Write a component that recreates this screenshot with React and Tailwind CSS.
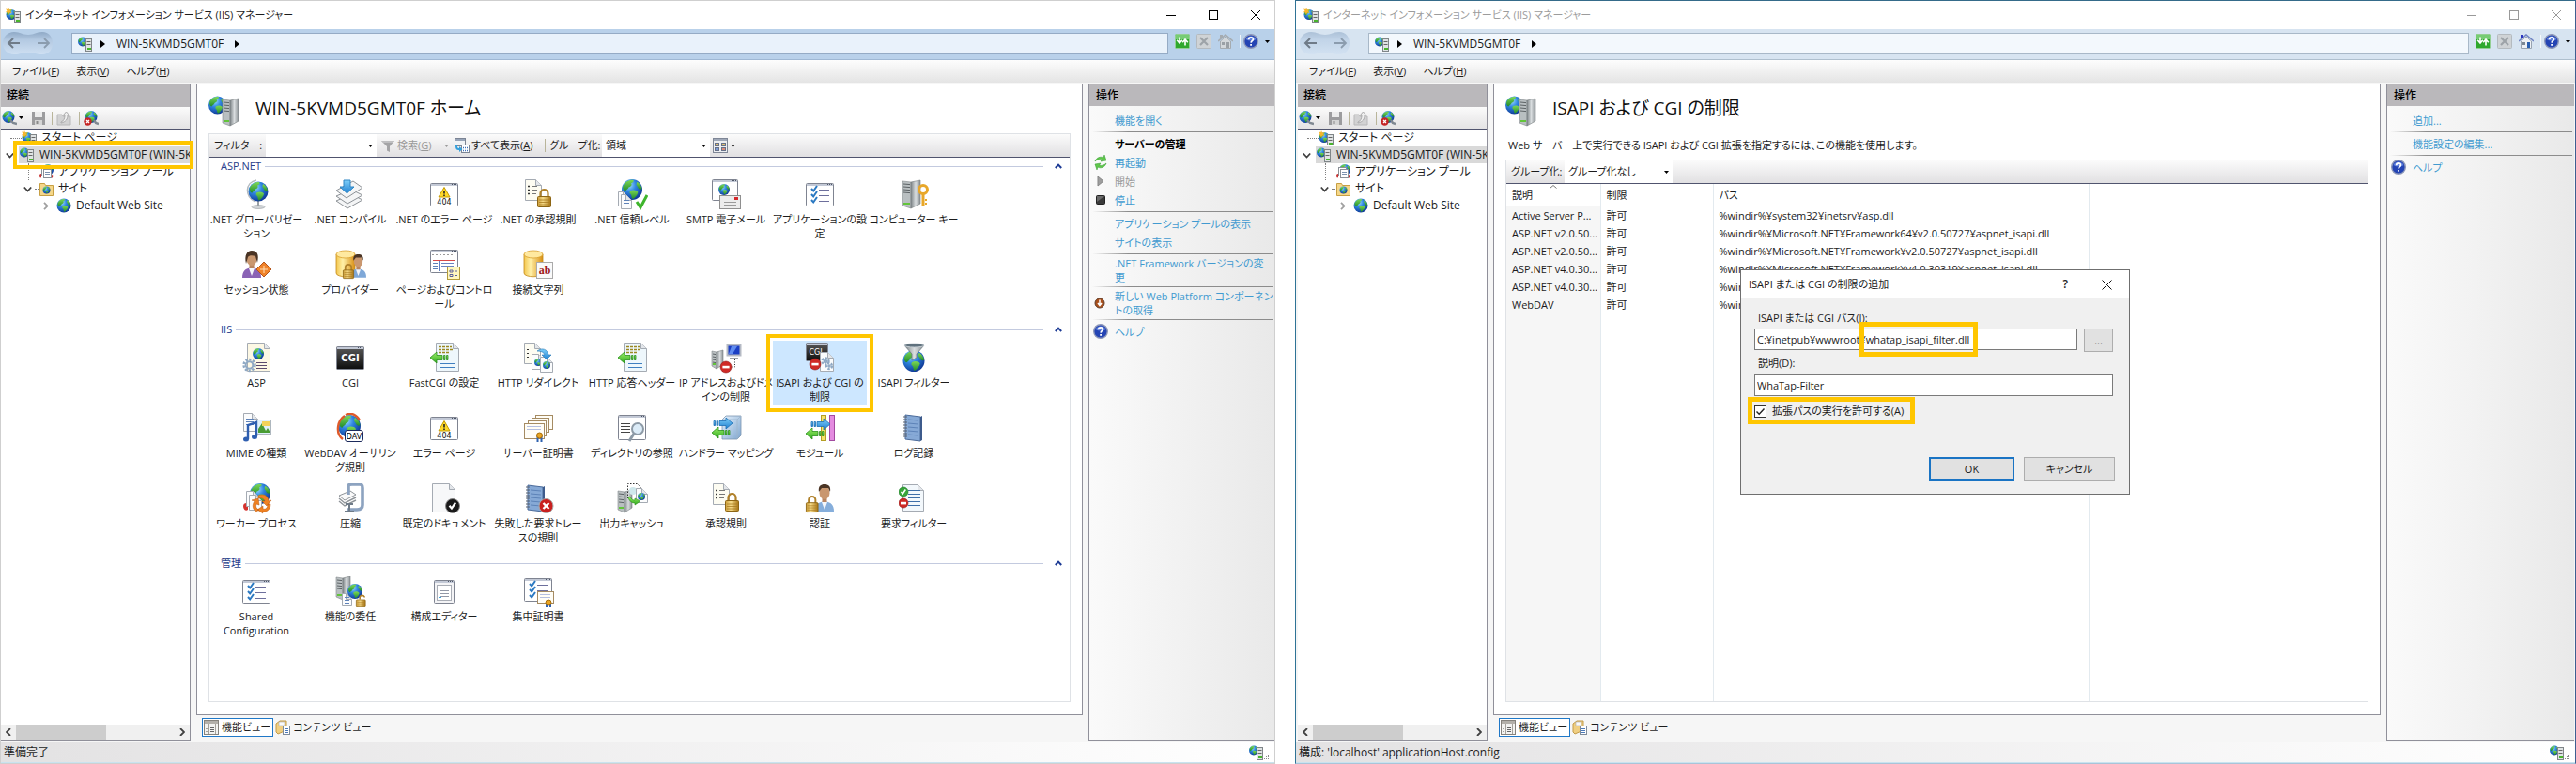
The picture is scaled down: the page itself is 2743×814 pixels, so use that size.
import React from "react";

/* ---------- shared gradients ---------- */
function Defs() {
  return (
    <svg width="0" height="0" className="absolute" aria-hidden="true">
      <defs>
        <radialGradient id="gSea" cx="0.36" cy="0.28" r="0.8">
          <stop offset="0" stopColor="#9fe0ff" />
          <stop offset="0.4" stopColor="#2f86e0" />
          <stop offset="1" stopColor="#0b2f8c" />
        </radialGradient>
        <linearGradient id="gLand" x1="0" y1="0" x2="0" y2="1">
          <stop offset="0" stopColor="#7ed957" />
          <stop offset="1" stopColor="#1f8a2b" />
        </linearGradient>
        <linearGradient id="gMetal" x1="0" y1="0" x2="1" y2="0">
          <stop offset="0" stopColor="#7d8487" />
          <stop offset="0.5" stopColor="#d9dddf" />
          <stop offset="1" stopColor="#8d9396" />
        </linearGradient>
        <linearGradient id="gGold" x1="0" y1="0" x2="1" y2="0">
          <stop offset="0" stopColor="#f3c64d" />
          <stop offset="0.35" stopColor="#fff0a8" />
          <stop offset="1" stopColor="#d98f12" />
        </linearGradient>
        <linearGradient id="gBrass" x1="0" y1="0" x2="1" y2="0">
          <stop offset="0" stopColor="#c99a35" />
          <stop offset="0.4" stopColor="#f7dc8a" />
          <stop offset="1" stopColor="#a87412" />
        </linearGradient>
        <linearGradient id="gDark" x1="0" y1="0" x2="0" y2="1">
          <stop offset="0" stopColor="#5a5a5a" />
          <stop offset="1" stopColor="#0c0c0c" />
        </linearGradient>
        <linearGradient id="gBlueBox" x1="0" y1="0" x2="1" y2="1">
          <stop offset="0" stopColor="#e6f2fd" />
          <stop offset="1" stopColor="#7fa6cf" />
        </linearGradient>
        <linearGradient id="gGreen" x1="0" y1="0" x2="0" y2="1">
          <stop offset="0" stopColor="#9cf06a" />
          <stop offset="1" stopColor="#2ea81c" />
        </linearGradient>
        <linearGradient id="gSky" x1="0" y1="0" x2="0" y2="1">
          <stop offset="0" stopColor="#7fd0fa" />
          <stop offset="1" stopColor="#1f7fd0" />
        </linearGradient>
        <linearGradient id="gPill" x1="0" y1="0" x2="0" y2="1">
          <stop offset="0" stopColor="#8fa9c6" />
          <stop offset="0.35" stopColor="#b3c9e2" />
          <stop offset="1" stopColor="#cfe0f2" />
        </linearGradient>
      </defs>
    </svg>
  );
}

/* ---------- drawing parts ---------- */
const at = (x, y, k = 1) => `translate(${x} ${y}) scale(${k})`;

function Globe({ x, y, r }) {
  return (
    <g transform={at(x, y, r / 10)}>
      <circle r="10" fill="url(#gSea)" />
      <path d="M-8.5-4C-6-8.5-2-9.6 1-9.4 2.5-8 .5-6.8-1-6 .5-4.6-1-3-3-2.4-3.4-.6-5.6 0-6.4 1.6-8 1-9.6-1-8.5-4Z" fill="url(#gLand)" />
      <path d="M-1.5 1.2C1-.2 4.4.4 5.8 2.4 5.4 5 3 7.6.8 9.2-1 8 .2 5.6-1.6 4.4-2.6 3.4-2.4 2-1.5 1.2Z" fill="url(#gLand)" />
      <path d="M5-7.6C7.6-6 9.4-3.4 9.6-.6 7.6.4 6-1 5.4-3 4-4 3.8-6 5-7.6Z" fill="url(#gLand)" />
    </g>
  );
}

function Tower({ x, y, w = 15, h = 27 }) {
  const f = Math.round(w * 0.45);
  return (
    <g transform={at(x, y)}>
      <path d={`M0 1 L${f} 2 V${h} L0 ${h - 3} Z`} fill="#b9bfc1" stroke="#81878a" strokeWidth=".6" />
      <path d={`M${f} 2 L${w} 0 V${h - 5} L${f} ${h} Z`} fill="url(#gMetal)" stroke="#777d80" strokeWidth=".6" />
      {[4, 7, 10, 13].filter((v) => v < h - 6).map((v) => (
        <path key={v} d={`M1 ${v} L${f - 1} ${v + 0.6}`} stroke="#5d6366" strokeWidth="1" />
      ))}
      <rect x="1" y={h - 6} width={f - 2} height="2" fill="#62c43a" />
    </g>
  );
}

function Frame({ x = 1, y = 4, w = 29, h = 24, fill = "#fff" }) {
  return (
    <g>
      <rect x={x + 0.5} y={y + 0.5} width={w} height={h} rx="1" fill={fill} stroke="#7f8491" />
      <rect x={x + 1} y={y + 1} width={w - 1} height="2" fill="#c3c9d6" />
      <path d={`M${x + w - 6} ${y + 1.5}h1m1 0h1m1 0h1`} stroke="#4d5566" />
    </g>
  );
}

function Page({ x, y, w = 19, h = 26, fill = "#fbfcfd", stroke = "#a5abb3" }) {
  const c = 6;
  return (
    <g transform={at(x + 0.5, y + 0.5)}>
      <path d={`M0 0H${w - c}L${w} ${c}V${h}H0Z`} fill={fill} stroke={stroke} />
      <path d={`M${w - c} 0V${c}H${w}`} fill="#e3e6ea" stroke={stroke} />
    </g>
  );
}

function Lock({ x, y, open }) {
  return (
    <g transform={at(x, y)}>
      <path d={open ? "M6 8V4a4 4 0 0 1 7 0v1" : "M3.5 9V5a4 4 0 0 1 8 0v4"} fill="none" stroke="#b0812a" strokeWidth="2.2" />
      <rect x="0.5" y="8.5" width="14" height="11" rx="1" fill="url(#gBrass)" stroke="#8d6514" />
      <path d="M2 12h11M2 14.500h11M2 17h11" stroke="#a87b22" strokeWidth=".8" />
    </g>
  );
}

function Person({ x, y, body, hair }) {
  return (
    <g transform={at(x, y)}>
      <path d="M0 29c0-7 3-10 10-11 7 1 10 4 10 11Z" fill={body} />
      <path d="M7 19l3 8 3-8Z" fill="#f4f6fa" />
      <rect x="7.500" y="13" width="5" height="6" fill="#b98560" />
      <ellipse cx="10" cy="9" rx="5.500" ry="7" fill="#c9976f" />
      <path d={hair === "long" ? "M4 14C2 5 5 0 10 0c6 0 8 4 6 13L14 6C11 5 7 5 6 7Z" : "M4 8C3 2 6 0 10 0s7 2 6 8l-2-4H7Z"} fill="#4a3424" />
    </g>
  );
}

function Drum({ x, y }) {
  return (
    <g transform={at(x, y)}>
      <path d="M0 4V24c0 5 20 5 20 0V4Z" fill="url(#gGold)" stroke="#c48a1a" strokeWidth=".8" />
      <ellipse cx="10" cy="4" rx="10" ry="4" fill="#ffe9a0" stroke="#d9a02c" strokeWidth=".8" />
    </g>
  );
}

const ArrowL = ({ x, y }) => (
  <g transform={at(x, y)} fill="url(#gGreen)" stroke="#2b8f1d" strokeWidth=".8">
    <path d="M0 6 7 0v3.500h6v5H7V12Z" />
    <path d="M14.500 3.500h1.500v5h-1.500zM17.500 3.500h1.500v5h-1.500z" />
  </g>
);
const ArrowR = ({ x, y }) => (
  <g transform={at(x, y)} fill="url(#gSky)" stroke="#1c6fb5" strokeWidth=".8">
    <path d="M20 6 13 0v3.500H6v5h7V12Z" />
    <path d="M0 3.500h1.500v5H0zM3 3.500h1.500v5H3z" />
  </g>
);
const Stop = ({ x, y, r = 6 }) => (
  <g>
    <circle cx={x} cy={y} r={r} fill="#cf2a26" stroke="#8f1c1c" strokeWidth=".6" />
    <rect x={x - r * 0.6} y={y - 1.2} width={r * 1.2} height="2.600" fill="#fff" />
  </g>
);
const Tick = ({ x, y, c = "#2b79c2", k = 1, w = 2 }) => (
  <path transform={at(x, y, k)} d="M0 3 2.200 5.500 6 0" fill="none" stroke={c} strokeWidth={w} />
);
const Checks = () => (
  <g>
    {[9, 15, 21].map((v) => (
      <g key={v}>
        <Tick x={7} y={v - 2} />
        <path d={`M15 ${v + 2.5}h11`} stroke="#6d6f9c" />
      </g>
    ))}
  </g>
);
const Lines = ({ x, y, w, n, gap = 3, c = "#5e82b8" }) => (
  <path d={Array.from({ length: n }, (_, i) => `M${x} ${y + i * gap + 0.5}h${w}`).join("")} stroke={c} />
);
const Error404 = () => (
  <g>
    <Frame />
    <path d="M16 8.500 22 19H10Z" fill="#ffd928" stroke="#c49a00" strokeLinejoin="round" />
    <path d="M16 12v3.500M16 16.500v1.500" stroke="#222" strokeWidth="1.600" />
    <text x="16" y="27" fontSize="8" fontFamily="DejaVu Sans" textAnchor="middle" fill="#111">404</text>
  </g>
);
const Book = ({ x, y }) => (
  <g transform={at(x, y)}>
    <path d="M3 1 19 3V29L3 27Z" fill="#86a9d6" stroke="#4a6a9a" />
    <path d="M19 3 21 2V28L19 29Z" fill="#3d5b8c" />
    <path d="M6 6l11 1M6 10l11 1M6 14l11 1M6 18l11 1M6 22l11 1" stroke="#5d83b8" />
    <path d="M1 3h4M1 6h4M1 9h4M1 12h4M1 15h4M1 18h4M1 21h4M1 24h4" stroke="#56606e" />
  </g>
);
const Cert = ({ x, y, w = 18, h = 12 }) => (
  <g>
    <rect x={x + 0.5} y={y + 0.5} width={w} height={h} fill="#fffdf6" stroke="#a58b62" />
    <Lines x={x + 3} y={y + 3} w={w - 6} n={2} c="#b4bfe0" />
  </g>
);
const Seal = ({ x, y }) => (
  <g>
    <path d={`M${x - 2} ${y + 1}v6M${x + 2} ${y + 1}v6`} stroke="#2f62b0" strokeWidth="2" />
    <circle cx={x} cy={y} r="3" fill="#e9a420" stroke="#a86c08" />
  </g>
);
const Cog = ({ x, y, r = 6 }) => (
  <g fill="none" stroke="#8fa9c4">
    <circle cx={x} cy={y} r={r} strokeWidth="2.400" strokeDasharray="2.300 1.600" />
    <circle cx={x} cy={y} r={r - 2.2} strokeWidth="2" />
  </g>
);
const ListPage = () => (
  <g>
    <Page x={2} y={0} w={17} h={22} fill="#fdfcf2" />
    <path d="M5 7.500h2M5 11.500h2M5 15.500h2" stroke="#333" strokeWidth="1.600" />
    <path d="M9 7.500h6M9 11.500h6M9 15.500h5" stroke="#777" />
  </g>
);

/* ---------- 32px feature icons ---------- */
const art = {
  globalization: (
    <g>
      <ellipse cx="18" cy="29.500" rx="7" ry="2" fill="#cfd3d6" stroke="#9aa0a5" strokeWidth=".6" />
      <path d="M17 23h2v6h-2z" fill="#9aa0a5" />
      <path d="M16 1C4 3 3 19 15 24" fill="none" stroke="#b5babf" strokeWidth="1.600" />
      <Globe x={18} y={13} r={10.500} />
    </g>
  ),
  compile: (
    <g fill="#f4f5f6" stroke="#8c9196" strokeLinejoin="round">
      <path d="M1 23 17 16 29 22 13 31Z" />
      <path d="M1 18 17 11 29 17 13 26Z" />
      <path d="M1 12 19 2 29 9 12 20Z" />
      <path d="M9 1h7v7h4l-7.500 7L5 8h4Z" fill="url(#gSky)" stroke="#2f86c4" />
    </g>
  ),
  error: <Error404 />,
  auth: (
    <g>
      <ListPage />
      <Lock x={15} y={10} />
    </g>
  ),
  trust: (
    <g>
      <Globe x={16} y={11} r={11} />
      <Page x={1} y={13} w={11} h={15} />
      <Page x={4} y={16} w={11} h={15} />
      <Lines x={7} y={22} w={6} n={3} />
      <path d="M21 24l4 6 7-13" fill="none" stroke="#3fb52c" strokeWidth="3" />
    </g>
  ),
  smtp: (
    <g>
      <Frame x={1} y={0} w={27} h={22} />
      <Globe x={14} y={11} r={6} />
      <rect x="9.500" y="17.500" width="22" height="14" fill="#ececec" stroke="#8f8f8f" />
      <Lines x={14} y={24} w={13} n={2} c="#9a9a9a" />
      <rect x="25" y="19" width="4" height="3" fill="#d4282c" />
    </g>
  ),
  appset: (
    <g>
      <Frame />
      <Checks />
    </g>
  ),
  machine: (
    <g>
      <Tower x={4} y={1} w={19} h={30} />
      <circle cx="26" cy="11" r="4.500" fill="none" stroke="#e8a72a" strokeWidth="3" />
      <path d="M24.500 15h3v14h-3zM28 21h2v2h-2zM28 25h2v2h-2z" fill="#e8a72a" />
    </g>
  ),
  session: (
    <g>
      <Person x={1} y={1} body="#8a63b5" hair="long" />
      <path d="M24 13 32 21 24 29 16 21Z" fill="#f0832a" stroke="#b5551a" />
      <path d="M20 21h8M24 17v8" stroke="#ffe0b8" />
    </g>
  ),
  provider: (
    <g>
      <Drum x={1} y={1} />
      <g transform="translate(16 5) scale(.85)">
        <Person x={0} y={0} body="#7fa8d8" />
      </g>
      <g transform="translate(8 15) scale(.8)">
        <Lock x={0} y={0} />
      </g>
    </g>
  ),
  pages: (
    <g>
      <Frame x={1} y={0} w={29} h={24} />
      <path d="M3 5.500h24" stroke="#999" strokeDasharray="2 2" />
      <path d="M4 11.500h23" stroke="#d84848" />
      <path d="M10.500 12v11" stroke="#5f7fc4" />
      <Lines x={4} y={14} w={5} n={3} />
      <Lines x={13} y={14} w={13} n={2} c="#6a83c0" />
      <rect x="19.500" y="18.500" width="13" height="13" fill="#fff7bf" stroke="#b39b3a" />
      <path d="M22 22h3v2h-3zM22 26.500h3v2h-3zM27 23h3M27 27.500h3" stroke="#5a5f9c" fill="none" />
    </g>
  ),
  connstr: (
    <g>
      <Drum x={1} y={1} />
      <rect x="14.500" y="13.500" width="17" height="17" fill="#fafafa" stroke="#aaa" />
      <text x="23" y="26" fontSize="12" fontWeight="700" fontFamily="Liberation Serif" textAnchor="middle" fill="#a01818">ab</text>
    </g>
  ),
  asp: (
    <g>
      <Page x={6} y={0} w={24} h={30} fill="#fdf8e4" />
      <Globe x={18} y={12} r={6} />
      <Lines x={16} y={21} w={11} n={3} c="#5a4a6c" />
      <Cog x={8.500} y={24} r={6} />
    </g>
  ),
  cgi: (
    <g>
      <Frame fill="url(#gDark)" />
      <text x="16" y="20" fontSize="10" fontWeight="700" fontFamily="DejaVu Sans" textAnchor="middle" fill="#fff">CGI</text>
    </g>
  ),
  header: (
    <g>
      <Page x={7} y={0} w={24} h={30} fill="#eef7fc" />
      <path d="M10 4.500h14M10 7.500h16M10 10.500h12" stroke="#9c8820" strokeDasharray="3 1" strokeWidth="1.600" />
      <Lines x={12} y={22} w={15} n={2} gap={4} c="#3f7fc0" />
      <ArrowL x={1} y={10} />
    </g>
  ),
  redirect: (
    <g>
      <Page x={1} y={0} w={17} h={22} fill="#fdfcf2" />
      <path d="M4 7.500h2M4 11.500h2M4 15.500h2" stroke="#333" />
      <Page x={9} y={12} w={13} h={16} />
      <Globe x={16} y={21} r={4} />
      <Page x={18} y={15} w={13} h={16} />
      <Globe x={25} y={24} r={4} />
      <path d="M15 9c5-4 11-2 12 4h3l-5 5-5-5h3c-1-3-4-4-8-4Z" fill="url(#gSky)" stroke="#1f74b4" strokeWidth=".6" />
    </g>
  ),
  iprestrict: (
    <g>
      <Tower x={1} y={8} w={12} h={20} />
      <rect x="17.500" y="2.500" width="14" height="11" fill="#1b3fc4" stroke="#b5bac4" strokeWidth="2" />
      <path d="M22 4l6 0-5 8h-4Z" fill="#5f8cf0" />
      <path d="M20 16h9v1.500h-9z" fill="#9aa0a8" />
      <path d="M25.500 18v8h-5" fill="none" stroke="#333" strokeDasharray="1 1.500" />
      <Stop x={16} y={26} />
    </g>
  ),
  isapicgi: (
    <g>
      <Frame x={1} y={0} w={23} h={19} fill="url(#gDark)" />
      <text x="11.500" y="13" fontSize="8" fontFamily="DejaVu Sans" textAnchor="middle" fill="#fff">CGI</text>
      <Page x={16} y={10} w={14} h={20} />
      <Cog x={22} y={20} r={3.500} />
      <Cog x={26} y={25} r={3} />
      <Stop x={11} y={23} />
    </g>
  ),
  isapifilter: (
    <g>
      <Globe x={16} y={19.500} r={11.500} />
      <path d="M6 3 14 12V19l5-3V12L27 3Z" fill="url(#gMetal)" stroke="#6b7880" strokeWidth=".8" />
      <ellipse cx="16.500" cy="3" rx="10.500" ry="2" fill="#5f717d" stroke="#c5cdd3" />
    </g>
  ),
  mime: (
    <g>
      <Page x={2} y={0} w={15} h={19} />
      <Lines x={5} y={6} w={8} n={3} />
      <rect x="16.500" y="7.500" width="15" height="15" fill="#dff0fb" stroke="#aeb7be" />
      <path d="M18 21v-4l4-6 4 8 2-3 3 5Z" fill="#4a9c34" />
      <path d="M22 9h8v5h-8z" fill="#f3d25a" />
      <path d="M7 28V13l9-3v15" fill="none" stroke="#2f5fb0" strokeWidth="2.400" />
      <ellipse cx="5" cy="28" rx="3" ry="2.500" fill="#2f5fb0" />
      <ellipse cx="14" cy="25.500" rx="3" ry="2.500" fill="#2f5fb0" />
    </g>
  ),
  webdav: (
    <g>
      <Globe x={15} y={14} r={12} />
      <path d="M8 28C0 22 2 8 10 3M11 2c6-3 12 0 15 6" fill="none" stroke="#df5a2b" strokeWidth="2.400" />
      <rect x="10.500" y="18.500" width="19" height="12" rx="2.500" fill="#fff" stroke="#1c2a5c" />
      <text x="20" y="27.500" fontSize="8" fontFamily="DejaVu Sans" textAnchor="middle" fill="#000">DAV</text>
    </g>
  ),
  servercert: (
    <g>
      <Cert x={13} y={2} w={18} h={15} />
      <Cert x={9} y={5} w={18} h={15} />
      <Cert x={5} y={8} w={19} h={16} />
      <Cert x={1} y={11} w={21} h={16} />
      <Seal x={17.500} y={24} />
    </g>
  ),
  browse: (
    <g>
      <Frame x={1} y={2} w={29} h={26} />
      <path d="M4 7.500h20" stroke="#888" strokeDasharray="2 2" />
      <Lines x={4} y={11} w={10} n={4} c="#444" />
      <circle cx="22" cy="17" r="6" fill="#dcecf8" stroke="#8d9aa6" strokeWidth="2" />
      <path d="M18 22 13 30" stroke="#8d9aa6" strokeWidth="3" />
    </g>
  ),
  handler: (
    <g>
      <path d="M12 7 16 3H32V24L28 28H12Z" fill="url(#gBlueBox)" stroke="#7b95b0" strokeWidth=".8" />
      <path d="M28 28V7H12M28 7l4-4" fill="none" stroke="#9fb6cc" strokeWidth=".8" />
      <ArrowR x={3} y={5} />
      <ArrowL x={1} y={15} />
    </g>
  ),
  module: (
    <g>
      <rect x="17.500" y="2.500" width="5" height="27" fill="#f5e36a" stroke="#b59e24" />
      <rect x="26.500" y="2.500" width="5" height="27" fill="#e48be0" stroke="#a24aa0" />
      <ArrowR x={7} y={6} />
      <ArrowL x={1} y={16} />
    </g>
  ),
  log: <Book x={4} y={1} />,
  worker: (
    <g>
      <Globe x={20} y={11} r={11} />
      <path d="M2 24c0-3 4-4 5-2v6c-2 2-5 0-5-4Z" fill="#d4322e" />
      <Page x={5} y={8} w={13} h={16} />
      <Page x={8} y={12} w={13} h={16} />
      <path d="M18 13c6-3 11 1 11 6l3-1-5 6-5-5 3 0c-1-3-4-4-7-3ZM16 30c-4-2-5-7-2-11l-3-1 7-2 1 7-3-1c-1 3 0 5 3 6ZM31 22c0 6-4 9-9 8l1 2-6-4 6-4v3c3 1 5-1 5-5Z" fill="#ef8122" stroke="#b9560f" strokeWidth=".5" />
    </g>
  ),
  compress: (
    <g>
      <path d="M4 13 16 8 22 12 10 18Z" fill="#fafafa" stroke="#8f9499" />
      <path d="M4 16 10 21 22 15M4 19 10 24 22 18" fill="none" stroke="#8f9499" strokeWidth="1.400" />
      <path d="M14 12V3c0-2 2-2 4-2h8c3 0 3 2 3 4v18c0 4-3 5-6 5H12" fill="none" stroke="#8da3c0" strokeWidth="3.600" />
      <path d="M15 22v8M10 30h10M11 22h8" stroke="#6f7b88" strokeWidth="2" />
    </g>
  ),
  defaultdoc: (
    <g>
      <Page x={3} y={0} w={24} h={30} fill="#f7f8f9" />
      <circle cx="25" cy="24" r="7.500" fill="#1a1a1a" stroke="#888" />
      <Tick x={21.500} y={20.500} c="#fff" k={1.1} w={2} />
    </g>
  ),
  failed: (
    <g>
      <Book x={2} y={1} />
      <circle cx="24.500" cy="24" r="7.500" fill="#c9201f" stroke="#a9a9a9" />
      <path d="M21.500 21l6 6m0-6l-6 6" stroke="#fff" strokeWidth="2.400" />
    </g>
  ),
  cache: (
    <g>
      <Tower x={1} y={7} w={15} h={24} />
      <path d="M11.500 16V.5h10l4 4" fill="none" stroke="#333" strokeDasharray="1.500 1.500" />
      <circle cx="17" cy="8" r="4" fill="#cfe8ec" />
      <Page x={20} y={5} w={12} h={15} />
      <Globe x={26} y={14} r={4} />
      <path d="M14 14c1 3 3 4 5 4v-2l6 3-6 4v-2c-3 0-6-2-7-6Z" fill="url(#gGreen)" stroke="#2b8f1d" strokeWidth=".6" />
    </g>
  ),
  authn: (
    <g>
      <g transform="translate(11 0)">
        <Person x={0} y={1} body="#86aedb" />
      </g>
      <g transform="translate(1 13) scale(.9)">
        <Lock x={0} y={0} />
      </g>
    </g>
  ),
  reqfilter: (
    <g>
      <Page x={4} y={1} w={22} h={28} fill="#f3f8fc" />
      <Lines x={10} y={7} w={13} n={5} gap={4} c="#3f6fa8" />
      <circle cx="5" cy="9" r="5" fill="#38a53a" stroke="#1f7a28" strokeWidth=".6" />
      <Tick x={2.500} y={6.500} c="#fff" k={0.8} />
      <Stop x={5} y={21} r={5} />
    </g>
  ),
  delegate: (
    <g>
      <Tower x={1} y={0} w={15} h={25} />
      <Globe x={21} y={16} r={8} />
      <Page x={7} y={18} w={10} h={13} />
      <Lines x={10} y={22} w={5} n={3} />
      <g transform="translate(22 19) scale(.7)">
        <Lock x={0} y={0} open />
      </g>
    </g>
  ),
  config: (
    <g>
      <Frame x={5} y={4} w={21} h={24} fill="#f4f4f6" />
      <rect x="8.500" y="9.500" width="15" height="16" fill="#fff" stroke="#a9adb5" />
      <Lines x={11} y={12} w={10} n={4} c="#9297a6" />
      <path d="M10 22.500h3" stroke="#3aa4e0" />
    </g>
  ),
  central: (
    <g>
      <Frame x={1} y={2} />
      <g transform="translate(0 -2)">
        <Checks />
      </g>
      <Cert x={15} y={16} w={17} h={12} />
      <Seal x={27} y={28} />
    </g>
  ),
  host: (
    <g>
      <Globe x={9.500} y={10} r={9.500} />
      <Tower x={15} y={3} w={17} h={29} />
    </g>
  ),
};

function Feature({ name }) {
  return (
    <svg viewBox="0 0 33 33" className="size-[33px] shrink-0" aria-hidden="true">
      {art[name]}
    </svg>
  );
}

/* ---------- 16px icons ---------- */
const small = {
  host: (
    <g>
      <Globe x={5} y={5.500} r={5} />
      <rect x="8.500" y="2.500" width="6" height="13" fill="#dfe3e4" stroke="#7f8588" />
      <path d="M9.500 5.500h4M9.500 8.500h4" stroke="#666" />
      <rect x="10" y="12" width="4" height="2" fill="#49b52c" />
    </g>
  ),
  start: (
    <g>
      <Globe x={6} y={7.500} r={5.500} />
      <rect x="9.500" y="4.500" width="6" height="11" fill="#dfe3e4" stroke="#7f8588" />
      <path d="M10.500 7.500h4M10.500 10.500h4" stroke="#666" />
      <rect x="11" y="13" width="4" height="2" fill="#49b52c" />
      <path d="M3 0l1 2.500L6.500 2 5 4l1.500 2L4 5.500 3 8 2 5.500 0 5l1.500-1.500L0 1.500 2.500 2Z" fill="#f6b52c" />
    </g>
  ),
  pool: (
    <g>
      <Globe x={10} y={6} r={6} />
      <path d="M1 12c0-2 2-2 2-2v4c-1 1-2 0-2-2ZM13 15c2 0 3-2 2-4l-2 1Z" fill="#c93232" />
      <rect x="3.500" y="3.500" width="8" height="9" fill="#fff" stroke="#8a9097" />
      <rect x="5.500" y="5.500" width="8" height="9" fill="#fff" stroke="#8a9097" />
      <Lines x={7} y={8} w={5} n={3} gap={2} c="#7d93b0" />
    </g>
  ),
  folder: (
    <g>
      <path d="M1.500 2.500h5l1 2h8v11h-14Z" fill="#f5d789" stroke="#c79f43" />
      <Globe x={8.500} y={9.500} r={4} />
    </g>
  ),
  globe: <Globe x={8} y={8} r={7.500} />,
  connect: (
    <g>
      <Globe x={7} y={6.500} r={6.500} />
      <path d="M9 10l3 3 4 1" fill="none" stroke="#7f8891" strokeWidth="2.400" />
    </g>
  ),
  save: (
    <g>
      <path d="M1 1h14v14H1Z" fill="#9c9c9e" />
      <path d="M4 1h8v6H4Z" fill="#ececec" />
      <path d="M4 10h8v5H4Z" fill="#d5d5d5" />
      <path d="M5.500 11h2v3h-2z" fill="#8a8a8a" />
    </g>
  ),
  up: (
    <g>
      <path d="M1 4h5l1 2h8v9H1Z" fill="#d2d2d3" stroke="#b8b8b9" />
      <path d="M5 12c3-1 4-4 4-7H7l3.500-4L14 5h-2c0 4-2 7-7 8Z" fill="#efefef" stroke="#a9a9aa" />
    </g>
  ),
  disconnect: (
    <g>
      <Globe x={8} y={6.500} r={6.500} />
      <path d="M11 10l2 3 3 1" fill="none" stroke="#7f8891" strokeWidth="2.400" />
      <circle cx="4.500" cy="11.500" r="4.200" fill="#c52626" />
      <path d="M3 10l3 3m0-3l-3 3" stroke="#fff" strokeWidth="1.300" />
    </g>
  ),
  refresh: (
    <g>
      <rect x=".5" y=".5" width="15" height="15" rx="1" fill="#2fa82d" stroke="#93cf92" />
      <path d="M1 1h14v5H1z" fill="#76cc74" />
      <path d="M5 3.500v5m-2.800-1.700L5 10l2.800-3.200M11 12.500v-5M8.200 9.200 11 6l2.800 3.200" fill="none" stroke="#fff" strokeWidth="1.600" />
    </g>
  ),
  stop: (
    <g>
      <rect x=".5" y=".5" width="15" height="15" rx="1" fill="#cfd3d6" stroke="#b4babf" />
      <path d="M4 4l8 8m0-8l-8 8" stroke="#9da3a8" strokeWidth="2.200" />
    </g>
  ),
  homeOff: (
    <g>
      <path d="M2.500 8v7.500h11V8L8 3Z" fill="#d3d7da" stroke="#a5abb0" />
      <path d="M0 8 8 1l8 7" fill="none" stroke="#a5abb0" strokeWidth="1.600" />
      <path d="M9 9h3v6H9z" fill="#9aa0a5" />
      <path d="M4 9h3v3H4z" fill="#9aa0a5" />
      <path d="M2 1h3v4H2z" fill="#a5abb0" />
    </g>
  ),
  home: (
    <g>
      <path d="M2.500 8v7.500h11V8L8 3Z" fill="#edf0f4" stroke="#98a3b0" />
      <path d="M0 8 8 1l8 7" fill="none" stroke="#7084c4" strokeWidth="1.600" />
      <path d="M9 9h3v6H9z" fill="#2a5fb0" />
      <path d="M4 9h3v3H4z" fill="#7b8794" />
      <path d="M2 1h3v4H2z" fill="#2c35c0" />
    </g>
  ),
  help: (
    <g>
      <circle cx="8" cy="8" r="7.300" fill="#2444b4" stroke="#8d97b8" strokeWidth="1.400" />
      <path d="M2.500 6A6 6 0 0 1 13.500 6C10 8 6 8 2.500 6Z" fill="#5f80dc" />
      <path d="M5.600 6.200C5.800 3 10.600 3.200 10.400 6 10.300 7.600 8.200 7.800 8.100 9.600M8.100 11v1.800" fill="none" stroke="#fff" strokeWidth="1.800" />
    </g>
  ),
  funnel: (
    <g>
      <path d="M1 3h14L10 9v6l-3-1.500V9Z" fill="#a4a4a6" />
      <path d="M2 4h12" stroke="#c9c9ca" strokeWidth="1.500" />
    </g>
  ),
  showAll: (
    <g>
      <rect x=".5" y=".5" width="11" height="8" fill="#f1f3f6" stroke="#7b8494" />
      <path d="M1 2h10" stroke="#97a4b8" strokeWidth="2" />
      <rect x="7.500" y="7.500" width="8" height="8" fill="#fff" stroke="#7b8494" />
      <path d="M9 10.500h1m1 0h1m1 0h1m-5 3h1m1 0h1m1 0h1" stroke="#3f6fb8" strokeWidth="1.400" />
      <path d="M1 8c0 4 1 5 4 5v2l3.500-3L5 9v2c-2 0-2-1-2-3Z" fill="#35a0dc" />
    </g>
  ),
  viewMode: (
    <g>
      <rect x=".5" y=".5" width="15" height="15" fill="#eceef1" stroke="#7e8696" />
      <path d="M1 2h14" stroke="#9fa8b8" strokeWidth="2" />
      <g fill="#dfc070" stroke="#667088">
        <rect x="2.500" y="5.500" width="4" height="3" />
        <rect x="9.500" y="5.500" width="4" height="3" />
        <rect x="2.500" y="10.500" width="4" height="3" fill="#7a9bd8" />
        <rect x="9.500" y="10.500" width="4" height="3" fill="#d88a7a" />
      </g>
    </g>
  ),
  restart: (
    <g fill="#5fc84a" stroke="#2f962a" strokeWidth=".5">
      <path d="M2 7C3 3 8 1 11 3l1-3 2 6-6 1 1.500-2C7 4 4 5 2 7Z" />
      <path d="M14 9c-1 4-6 6-9 4l-1 3-2-6 6-1-1.500 2c2.500 1 5.500 0 7.500-2Z" />
    </g>
  ),
  play: <path d="M5 3 11 8 5 13Z" fill="#9e9e9e" stroke="#858585" strokeLinejoin="round" />,
  halt: (
    <g>
      <rect x="3.500" y="3.500" width="9" height="9" rx="1" fill="#3a3a3a" stroke="#222" />
      <path d="M4 4h8L4 10Z" fill="#6a6a6a" />
    </g>
  ),
  webpi: (
    <g>
      <circle cx="7" cy="8" r="5" fill="#a9501c" stroke="#5f3b28" />
      <path d="M7 4.500v5M5 8l2 2.600L9 8" fill="none" stroke="#fff" strokeWidth="1.500" />
    </g>
  ),
  featureView: (
    <g>
      <rect x=".5" y=".5" width="15" height="15" fill="#f3f3f1" stroke="#85827c" />
      <path d="M1 2.500h14" stroke="#b3b0aa" strokeWidth="3" />
      <path d="M5.500 4v11M12.500 4v11" stroke="#a5a29c" />
      <Lines x={7} y={6} w={4} n={4} gap={2} c="#666" />
      <path d="M2 6.500h2M2 9.500h2M2 12.500h2" stroke="#a5a29c" />
    </g>
  ),
  contentView: (
    <g>
      <path d="M1 4 5 1H12V11L3 15 1 13Z" fill="#f0cf82" stroke="#c39b48" />
      <rect x="4" y="2" width="6" height="4" fill="#fafafa" stroke="#aaa" strokeWidth=".6" />
      <rect x="8.500" y="6.500" width="7" height="9" fill="#fff" stroke="#7e8b9a" />
      <Lines x={10} y={9} w={4} n={3} gap={2} c="#4a78b8" />
    </g>
  ),
};

function Ico({ name, className = "" }) {
  return (
    <svg viewBox="0 0 16 16" className={`size-4 shrink-0 ${className}`} aria-hidden="true">
      {small[name]}
    </svg>
  );
}

const Caret = ({ className = "fill-black" }) => (
  <svg viewBox="0 0 5 3" className={`h-[3px] w-[5px] shrink-0 ${className}`} aria-hidden="true">
    <path d="M0 0h5L2.500 3Z" />
  </svg>
);
const CaretRight = () => (
  <svg viewBox="0 0 5 8" className="h-2 w-[5px] shrink-0" aria-hidden="true">
    <path d="M0 0 5 4 0 8Z" />
  </svg>
);

/* ---------- window chrome ---------- */
function TitleBar({ active, pad }) {
  return (
    <header className={`flex h-[30px] shrink-0 items-center gap-1 bg-white pr-3 ${pad ? "pl-2" : "pl-[5px]"}`}>
      <Ico name="start" />
      <h1 className={`flex-1 whitespace-nowrap pl-px ${active ? "text-[#1c1c1c]" : "text-[#9c9c9c]"}`}>
        インターネット インフォメーション サービス (IIS) マネージャー
      </h1>
      <div className={`flex items-center gap-[35px] pr-[3px] ${active ? "text-black" : "text-[#999]"}`}>
        <button aria-label="最小化">
          <svg viewBox="0 0 10 10" className="size-[10px]" stroke="currentColor"><path d="M0 5.500h10" /></svg>
        </button>
        <button aria-label="最大化">
          <svg viewBox="0 0 10 10" className="size-[10px]" stroke="currentColor" fill="none"><rect x=".5" y=".5" width="9" height="9" /></svg>
        </button>
        <button aria-label="閉じる">
          <svg viewBox="0 0 10 10" className="size-[10px]" stroke="currentColor"><path d="M0 0 10 10M10 0 0 10" /></svg>
        </button>
      </div>
    </header>
  );
}

function NavBar({ active, pad }) {
  return (
    <nav
      className={`flex h-[33px] shrink-0 items-start border-b pt-1 ${pad ? "pl-[3px]" : "pl-px"} ${
        active ? "border-[#9fb8d4] bg-[#b9d1ea]" : "border-[#aebfce] bg-[#d7e4f1]"
      }`}
    >
      <svg viewBox="0 0 56 26" className="-mt-0.5 h-[26px] w-14 shrink-0" aria-hidden="true">
        <path
          d="M13 1C20 1 21 4 28 4S36 1 43 1C50 1 54 6 54 13S50 25 43 25C36 25 35 23 28 23S20 25 13 25C6 25 1 20 1 13S6 1 13 1Z"
          fill="url(#gPill)"
          opacity={active ? 1 : 0.6}
        />
        <path d="M19 13H8M12 8 7 13l5 5" fill="none" stroke="#6f7b88" strokeWidth="2" />
        <path d="M38 13H49M45 8l5 5-5 5" fill="none" stroke="#8b9cae" strokeWidth="1.800" />
      </svg>
      <div
        className={`ml-[18px] flex h-[23px] flex-1 items-center gap-2 border pl-1.5 ${
          active ? "border-[#95abc5] bg-[#e9f2fb]" : "border-[#a8b8c8] bg-[#f3f8fd]"
        }`}
      >
        <Ico name="host" />
        <CaretRight />
        <a href="#host" className="px-1 text-[12px]">WIN-5KVMD5GMT0F</a>
        <CaretRight />
      </div>
      <div className="flex items-center gap-[7px] pr-[5px] pl-[7px] pt-px">
        <button aria-label="最新の情報に更新"><Ico name="refresh" /></button>
        <button aria-label="中止"><Ico name="stop" /></button>
        <button aria-label="ホーム"><Ico name={active ? "homeOff" : "home"} /></button>
        <span className="h-3.5 w-px bg-white/80" />
        <button aria-label="ヘルプ" className="-ml-1 flex items-center gap-[7px]">
          <Ico name="help" />
          <Caret />
        </button>
      </div>
    </nav>
  );
}

function MenuBar({ pad }) {
  return (
    <div className={`flex h-6 shrink-0 items-center gap-[18px] bg-linear-to-b from-[#fdfdfd] to-[#e4e4e4] ${pad ? "pl-[14px]" : "pl-3"}`}>
      <button>ファイル(<u>F</u>)</button>
      <button>表示(<u>V</u>)</button>
      <button>ヘルプ(<u>H</u>)</button>
    </div>
  );
}

function Chevron({ open }) {
  return (
    <svg viewBox="0 0 9 9" className="size-[9px] shrink-0" fill="none" strokeWidth="1.800" aria-hidden="true">
      {open ? <path d="M.8 2.500 4.500 6.500 8.200 2.500" stroke="#404040" /> : <path d="M3 0.800 6.500 4.500 3 8.200" stroke="#a0a0a0" />}
    </svg>
  );
}

const Dots = ({ className }) => <span aria-hidden="true" className={`border-[#808080] border-dotted ${className}`} />;

function Connections({ marked }) {
  return (
    <aside className="flex w-[202px] shrink-0 flex-col border border-l-0 border-[#90909a] bg-white text-[12px]">
      <h2 className="flex h-6 shrink-0 items-center bg-[#bab8bb] pl-1.5 font-medium text-black">接続</h2>
      <div className="flex h-6 shrink-0 items-center border-b border-[#50546e] bg-linear-to-b from-[#fbfbfb] to-[#e4e3e4] pl-px">
        <button aria-label="接続の作成" className="flex items-center gap-[2px]"><Ico name="connect" /><Caret /></button>
        <button aria-label="保存" className="ml-2"><Ico name="save" /></button>
        <span className="ml-1.5 h-3.5 w-px bg-[#b9b59a]" />
        <button aria-label="上へ" className="ml-1"><Ico name="up" /></button>
        <span className="ml-2 h-3.5 w-px bg-[#b9b59a]" />
        <button aria-label="接続の解除" className="ml-1"><Ico name="disconnect" /></button>
      </div>
      <ul className="min-h-0 flex-1 whitespace-nowrap">
        <li className="flex h-[18px] items-center pl-[10px]">
          <Dots className="w-3 border-t" />
          <Ico name="start" />
          <a href="#start" className="pl-[5px]">スタート ページ</a>
        </li>
        <li className="relative flex h-[18px] items-center pl-[5px]">
          <button aria-label="折りたたむ" className="mr-[5px]"><Chevron open /></button>
          <span className="flex h-[18px] min-w-0 flex-1 items-center overflow-hidden bg-[#d9d9d9]">
            <Dots className="w-[3px] border-t" />
            <Ico name="host" className="ml-px" />
            <a href="#host" className="pl-[5px]">WIN-5KVMD5GMT0F (WIN-5KVMD5GMT0F)</a>
          </span>
          {marked && <span aria-hidden="true" className="absolute -top-1.5 -right-1 -bottom-1.5 left-[13px] z-10 border-4 border-[#ffc600]" />}
        </li>
        <li className="flex h-[18px] items-center pl-[29px]">
          <Dots className="h-full w-[11px] border-l" />
          <Ico name="pool" />
          <a href="#pools" className="pl-[5px]">アプリケーション プール</a>
        </li>
        <li className="flex h-[18px] items-center pl-6">
          <button aria-label="折りたたむ"><Chevron open /></button>
          <Dots className="ml-[3px] w-1 border-t" />
          <Ico name="folder" />
          <a href="#sites" className="pl-[5px]">サイト</a>
        </li>
        <li className="flex h-[18px] items-center pl-[43px]">
          <button aria-label="展開"><Chevron /></button>
          <Dots className="ml-[3px] w-1 border-t" />
          <Ico name="globe" />
          <a href="#default" className="pl-[5px]">Default Web Site</a>
        </li>
      </ul>
      <div className="flex h-4 shrink-0 items-center bg-[#f0f0f0]">
        <button aria-label="左へ" className="flex w-4 justify-center">
          <svg viewBox="0 0 6 8" className="h-2 w-1.5" fill="none" stroke="#404040" strokeWidth="1.800"><path d="M5 0 1 4l4 4" /></svg>
        </button>
        <span className="h-4 w-24 bg-[#cdcdcd]" />
        <button aria-label="右へ" className="ml-auto flex w-4 justify-center">
          <svg viewBox="0 0 6 8" className="h-2 w-1.5" fill="none" stroke="#404040" strokeWidth="1.800"><path d="M1 0l4 4-4 4" /></svg>
        </button>
      </div>
    </aside>
  );
}

function ViewTabs() {
  return (
    <div className="flex h-[27px] shrink-0 items-start gap-[2px] pt-[3px] pl-1.5">
      <button className="flex h-5 items-center gap-[3px] border border-[#1f78c8] bg-white pr-[2px] pl-px"><Ico name="featureView" />機能ビュー</button>
      <button className="flex h-5 items-center gap-[3px]"><Ico name="contentView" />コンテンツ ビュー</button>
    </div>
  );
}

function Actions({ groups, wide }) {
  return (
    <aside className={`flex shrink-0 flex-col border border-r-0 border-[#90909a] bg-linear-to-r from-[#fafafa] to-[#e9e9e9] ${wide ? "w-[200px]" : "w-[198px]"}`}>
      <h2 className="flex h-[23px] shrink-0 items-center bg-[#bab8bb] pl-[7px] text-[12px] font-medium text-black">操作</h2>
      <div className="pt-[3px]">
        {groups.map((items, i) => (
          <div key={i}>
            {i > 0 && <div className="mr-[2px] ml-[3px] h-px bg-linear-to-r from-transparent via-[#8c8c8c] via-20% to-[#8c8c8c]" />}
            <ul className="py-[2px]">
              {items.map((it) => (
                <li key={it.text} className="flex min-h-5 items-center pl-1 leading-[15px]">
                  <span className="flex w-[23px] shrink-0">{it.icon && <Ico name={it.icon} />}</span>
                  {it.head ? (
                    <h3 className="font-bold text-black">{it.text}</h3>
                  ) : (
                    <a href="#action" className={`whitespace-pre ${it.off ? "text-[#9a9a9a]" : "text-[#419ad0]"}`}>{it.text}</a>
                  )}
                </li>
              ))}
            </ul>
          </div>
        ))}
      </div>
    </aside>
  );
}

function Window({ active, groups, status, children }) {
  const pad = !active;
  return (
    <section
      className={`relative flex min-w-0 flex-col border bg-[#f6f6f6] ${
        active ? "border-[#cfcfcf]" : "border-t-[#356b8a] border-r-[#3f5f90] border-b-[#a9c4d8] border-l-[#2f7396]"
      }`}
    >
      <TitleBar active={active} pad={pad} />
      <NavBar active={active} pad={pad} />
      <MenuBar pad={pad} />
      <div className={`flex flex-1 gap-1.5 pt-px pb-[2px] ${pad ? "pr-px pl-[2px]" : ""}`}>
        <Connections marked={active} />
        <div className="flex min-w-0 flex-1 flex-col">
          <main className="flex flex-1 flex-col border border-[#90909a] bg-white px-3 pt-3 pb-[13px]">{children}</main>
          <ViewTabs />
        </div>
        <Actions groups={groups} wide={pad} />
      </div>
      <footer className="flex h-[22px] shrink-0 items-center justify-between border-b border-[#c9e3f0] bg-linear-to-r from-[#e3e2e3] to-white pr-[5px] pl-[3px] text-[12px]">
        <span>{status}</span>
        <span className="flex items-end">
          <Ico name="host" />
          <svg viewBox="0 0 6 6" className="size-1.5" fill="#8a8a8a" aria-hidden="true"><path d="M4 0h1v1H4zM4 2h1v1H4zM4 4h1v1H4zM2 2h1v1H2zM2 4h1v1H2zM0 4h1v1H0z" /></svg>
        </span>
      </footer>
    </section>
  );
}

/* ---------- left window content ---------- */
const features = [
  ["ASP.NET", [
    ["globalization", ".NET グローバリゼー\nション"],
    ["compile", ".NET コンパイル"],
    ["error", ".NET のエラー ページ"],
    ["auth", ".NET の承認規則"],
    ["trust", ".NET 信頼レベル"],
    ["smtp", "SMTP 電子メール"],
    ["appset", "アプリケーションの設\n定"],
    ["machine", "コンピューター キー"],
    ["session", "セッション状態"],
    ["provider", "プロバイダー"],
    ["pages", "ページおよびコントロ\nール"],
    ["connstr", "接続文字列"],
  ]],
  ["IIS", [
    ["asp", "ASP"],
    ["cgi", "CGI"],
    ["header", "FastCGI の設定"],
    ["redirect", "HTTP リダイレクト"],
    ["header", "HTTP 応答ヘッダー"],
    ["iprestrict", "IP アドレスおよびドメ\nインの制限"],
    ["isapicgi", "ISAPI および CGI の\n制限"],
    ["isapifilter", "ISAPI フィルター"],
    ["mime", "MIME の種類"],
    ["webdav", "WebDAV オーサリン\nグ規則"],
    ["error", "エラー ページ"],
    ["servercert", "サーバー証明書"],
    ["browse", "ディレクトリの参照"],
    ["handler", "ハンドラー マッピング"],
    ["module", "モジュール"],
    ["log", "ログ記録"],
    ["worker", "ワーカー プロセス"],
    ["compress", "圧縮"],
    ["defaultdoc", "既定のドキュメント"],
    ["failed", "失敗した要求トレー\nスの規則"],
    ["cache", "出力キャッシュ"],
    ["auth", "承認規則"],
    ["authn", "認証"],
    ["reqfilter", "要求フィルター"],
  ]],
  ["管理", [
    ["appset", "Shared\nConfiguration"],
    ["delegate", "機能の委任"],
    ["config", "構成エディター"],
    ["central", "集中証明書"],
  ]],
];

function FeatureGroup({ title, items }) {
  return (
    <section className="pb-[3px]">
      <h3 className="flex h-[18px] items-center gap-1 pl-3 text-[#27408b]">
        {title}
        <span className="h-px flex-1 bg-[#c3cadf]" />
        <button aria-label={`${title} を折りたたむ`} className="flex w-6 justify-center">
          <svg viewBox="0 0 8 6" className="h-1.5 w-2" fill="none" stroke="#1c3a94" strokeWidth="2"><path d="M.8 5 4 1.600 7.200 5" /></svg>
        </button>
      </h3>
      <div className="grid grid-cols-[repeat(8,100px)] gap-y-1.5 pt-[3px] pb-1.5">
        {items.map(([icon, label]) => {
          const chosen = icon === "isapicgi";
          return (
            <button key={label} className={`relative flex h-[69px] flex-col items-center pt-[2px] ${chosen ? "bg-[#cde7ff]" : ""}`}>
              <Feature name={icon} />
              <span className="whitespace-pre pt-[2px] text-center leading-[15px]">{label}</span>
              {chosen && <span aria-hidden="true" className="absolute -inset-[7px] z-10 border-4 border-[#ffc600]" />}
            </button>
          );
        })}
      </div>
    </section>
  );
}

function Heading({ children }) {
  return (
    <div className="flex h-[33px] shrink-0 items-start gap-[17px]">
      <Feature name="host" />
      <h2 className="whitespace-nowrap text-[19px] leading-[26px] text-[#111]">{children}</h2>
    </div>
  );
}

const bar = "flex h-[25px] shrink-0 items-center border-b border-[#50546e] bg-linear-to-b from-[#fbfbfb] to-[#e1e0e2] whitespace-nowrap";

function Picker({ id, value }) {
  return (
    <span className="relative flex h-full w-[115px] items-center bg-white">
      <select id={id} defaultValue={value} className="h-full w-full appearance-none bg-transparent pl-1 outline-none">
        <option>{value}</option>
      </select>
      <span className="pointer-events-none absolute right-1"><Caret /></span>
    </span>
  );
}

function HomeView() {
  return (
    <>
      <Heading>WIN-5KVMD5GMT0F ホーム</Heading>
      <div className="mt-[7px] flex flex-1 flex-col border border-[#dfe2e6]">
        <div className={bar}>
          <label htmlFor="filter" className="w-[60px] shrink-0 pl-[5px]">フィルター:</label>
          <span className="relative flex h-full w-[118px] items-center bg-white">
            <input id="filter" className="h-full w-full bg-transparent pl-1 outline-none" />
            <span className="pointer-events-none absolute right-1"><Caret /></span>
          </span>
          <button className="ml-1 flex w-[60px] items-center gap-[2px] text-[#9a9a9a]"><Ico name="funnel" /><span>検索(<u>G</u>)</span></button>
          <span className="ml-2"><Caret className="fill-[#9a9a9a]" /></span>
          <button className="ml-1.5 flex w-[90px] items-center gap-[2px]"><Ico name="showAll" /><span>すべて表示(<u>A</u>)</span></button>
          <span className="mr-1 ml-1.5 h-3.5 w-px bg-[#b9b59a]" />
          <label htmlFor="group" className="w-[56px] shrink-0">グループ化:</label>
          <Picker id="group" value="領域" />
          <button aria-label="表示形式" className="ml-[3px] flex items-center gap-[3px]"><Ico name="viewMode" /><Caret /></button>
        </div>
        {features.map(([title, items]) => (
          <FeatureGroup key={title} title={title} items={items} />
        ))}
      </div>
    </>
  );
}

/* ---------- right window content ---------- */
const rows = [
  ["Active Server P...", "%windir%¥system32¥inetsrv¥asp.dll"],
  ["ASP.NET v2.0.50...", "%windir%¥Microsoft.NET¥Framework64¥v2.0.50727¥aspnet_isapi.dll"],
  ["ASP.NET v2.0.50...", "%windir%¥Microsoft.NET¥Framework¥v2.0.50727¥aspnet_isapi.dll"],
  ["ASP.NET v4.0.30...", "%windir%¥Microsoft.NET¥Framework¥v4.0.30319¥aspnet_isapi.dll"],
  ["ASP.NET v4.0.30...", "%windir%¥Microsoft.NET¥Framework64¥v4.0.30319¥aspnet_isapi.dll"],
  ["WebDAV", "%windir%¥system32¥inetsrv¥webdav.dll"],
];

function RestrictionView() {
  return (
    <>
      <Heading>ISAPI および CGI の制限</Heading>
      <p className="mt-[11px] h-[18px] pl-[3px] leading-[18px]">
        Web サーバー上で実行できる ISAPI および CGI 拡張を指定するには、この機能を使用します。
      </p>
      <div className="mt-1.5 flex flex-1 flex-col border border-[#dfe2e6]">
        <div className={bar}>
          <label htmlFor="rgroup" className="w-[62px] shrink-0 pl-[5px]">グループ化:</label>
          <Picker id="rgroup" value="グループ化なし" />
        </div>
        <div className="grid flex-1">
          <table className="w-full table-fixed border-collapse text-left whitespace-nowrap">
            <colgroup>
              <col className="w-[100px]" />
              <col className="w-[120px]" />
              <col className="w-[400px]" />
              <col />
            </colgroup>
            <thead>
              <tr className="h-6">
                <th className="relative border-r border-[#e3eaef] pl-1.5 font-normal">
                  説明
                  <svg viewBox="0 0 8 4" className="absolute top-px left-[46px] h-1 w-2" fill="none" stroke="#777"><path d="M.5 3.500 4 .5l3.500 3" /></svg>
                </th>
                <th className="border-r border-[#e3eaef] pl-1.5 font-normal">制限</th>
                <th className="border-r border-[#e3eaef] pl-1.5 font-normal">パス</th>
                <th />
              </tr>
            </thead>
            <tbody>
              {rows.map(([name, path], i) => (
                <tr key={i} className="h-[19px]">
                  <td className="border-r border-[#e3eaef] bg-[#f6f6f6] pl-1.5">{name}</td>
                  <td className="border-r border-[#e3eaef] pl-1.5">許可</td>
                  <td className="border-r border-[#e3eaef] pl-1.5">{path}</td>
                  <td />
                </tr>
              ))}
              <tr>
                <td className="border-r border-[#e3eaef] bg-[#f6f6f6]" />
                <td className="border-r border-[#e3eaef]" />
                <td className="border-r border-[#e3eaef]" />
                <td />
              </tr>
            </tbody>
          </table>
        </div>
      </div>
    </>
  );
}

function AddDialog() {
  const field = "h-[23px] w-full border border-[#7a7a7a] bg-white px-[2px] outline-none";
  return (
    <div role="dialog" aria-labelledby="dlg" className="absolute top-[286px] left-[473px] z-20 w-[415px] border border-[#6f6f6f] bg-[#f0f0f0]">
      <div className="flex h-[30px] items-center bg-white pr-[18px] pl-2">
        <h2 id="dlg" className="flex-1">ISAPI または CGI の制限の追加</h2>
        <button aria-label="ヘルプ" className="mr-9 text-[12px] font-semibold">?</button>
        <button aria-label="閉じる">
          <svg viewBox="0 0 11 11" className="size-[11px]" stroke="#111"><path d="M.5.500l10 10m0-10l-10 10" /></svg>
        </button>
      </div>
      <form className="pt-3 pr-[17px] pb-[14px] pl-[14px]">
        <label htmlFor="path" className="block h-5 pl-1 leading-[18px]">ISAPI または CGI パス(I):</label>
        <div className="flex items-start gap-[7px]">
          <span className="relative flex flex-1">
            <input id="path" className={field} defaultValue="C:¥inetpub¥wwwroot¥whatap_isapi_filter.dll" />
            <span aria-hidden="true" className="absolute -top-[7px] left-[112px] h-[37px] w-[126px] border-5 border-[#ffc600]" />
          </span>
          <button type="button" className="h-[25px] w-[31px] border border-[#adadad] bg-[#e1e1e1]">...</button>
        </div>
        <label htmlFor="desc" className="block h-6 pl-1 leading-6">説明(D):</label>
        <input id="desc" className={field} defaultValue="WhaTap-Filter" />
        <div className="relative mt-[7px] flex h-[18px] items-center gap-1.5">
          <span className="relative flex">
            <input id="allow" type="checkbox" defaultChecked className="size-[13px] appearance-none border border-[#333] bg-white" />
            <svg viewBox="0 0 13 13" className="pointer-events-none absolute inset-0 size-[13px]" fill="none" stroke="#222" strokeWidth="1.400" aria-hidden="true"><path d="M2.500 6.500 5.200 9.300 10.500 3.500" /></svg>
          </span>
          <label htmlFor="allow">拡張パスの実行を許可する(A)</label>
          <span aria-hidden="true" className="absolute -top-1.5 -left-[7px] h-[29px] w-[178px] border-5 border-[#ffc600]" />
        </div>
        <div className="mt-10 -mr-[2px] flex justify-end gap-[10px]">
          <button type="button" className="h-[25px] w-[91px] border-2 border-[#1a74c4] bg-[#e1e1e1]">OK</button>
          <button type="button" className="h-[25px] w-[97px] border border-[#adadad] bg-[#e1e1e1]">キャンセル</button>
        </div>
      </form>
    </div>
  );
}

/* ---------- page ---------- */
const leftActions = [
  [{ text: "機能を開く" }],
  [
    { text: "サーバーの管理", head: true },
    { text: "再起動", icon: "restart" },
    { text: "開始", icon: "play", off: true },
    { text: "停止", icon: "halt" },
  ],
  [{ text: "アプリケーション プールの表示" }, { text: "サイトの表示" }],
  [{ text: ".NET Framework バージョンの変\n更" }],
  [{ text: "新しい Web Platform コンポーネン\nトの取得", icon: "webpi" }],
  [{ text: "ヘルプ", icon: "help" }],
];
const rightActions = [[{ text: "追加..." }], [{ text: "機能設定の編集..." }], [{ text: "ヘルプ", icon: "help" }]];

export default function App() {
  return (
    <div className="grid min-h-screen grid-cols-[1358fr_1364fr] gap-[21px] bg-white font-['Open_Sans','Noto_Sans_CJK_JP',sans-serif] text-[11px] leading-[18px] text-[#1c1c1c] [font-feature-settings:'palt']">
      <Defs />
      <Window active groups={leftActions} status="準備完了">
        <HomeView />
      </Window>
      <Window groups={rightActions} status="構成: 'localhost' applicationHost.config">
        <RestrictionView />
        <AddDialog />
      </Window>
    </div>
  );
}
